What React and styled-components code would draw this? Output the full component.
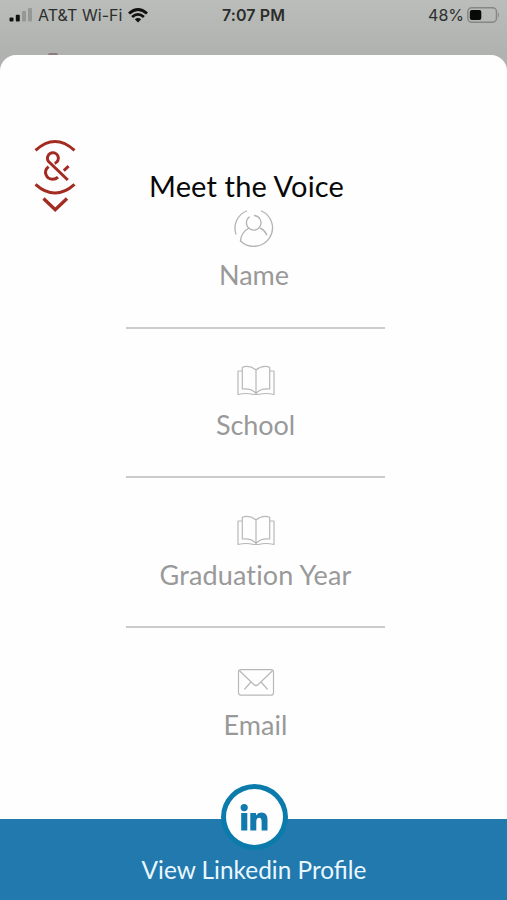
import React from 'react';
import styled, { createGlobalStyle } from 'styled-components';

const GlobalStyle = createGlobalStyle`
  * { box-sizing: border-box; }
  body { margin: 0; font-family: Lato, sans-serif; background: #b1b3b0; }
`;

const Screen = styled.main`
  width: 507px;
  height: 900px;
  display: flex;
  flex-direction: column;
  overflow: hidden;
  background: linear-gradient(#bbbdba 0, #b0b2af 55px, #b0b2af 100%);
`;

const StatusBar = styled.header`
  height: 55px;
  flex: none;
  display: grid;
  grid-template-columns: 1fr auto 1fr;
  grid-template-rows: 30px 1fr;
  align-items: center;
  padding: 0 7px 0 9px;
  font-family: Inter, sans-serif;
  font-size: 16px;
  color: #2c2e2c;
`;

const StatusGroup = styled.div`
  display: flex;
  align-items: center;
  justify-content: ${(p) => (p.$end ? 'flex-end' : 'flex-start')};
  gap: ${(p) => p.$gap}px;
  white-space: nowrap;
  svg { display: block; flex: none; }
`;

const StatusLabel = styled.span`
  font-size: 16px;
  letter-spacing: ${(p) => p.$tracking || 0}px;
`;

const Clock = styled.time`
  font-size: 16px;
  font-weight: 600;
  letter-spacing: 0.1px;
  margin-right: 2px;
`;

const BackgroundTab = styled.span`
  grid-row: 2;
  align-self: end;
  width: 10px;
  height: 2px;
  margin-left: 39px;
  background: #8d7c7b;
  border-radius: 2px 2px 0 0;
`;

const Sheet = styled.section`
  flex: 1;
  display: flex;
  flex-direction: column;
  background: #fefefe;
  border-radius: 16px 16px 0 0;
`;

const SheetHeader = styled.div`
  height: 148px;
  flex: none;
  display: grid;
  grid-template-columns: 78px 1fr 92px;
  align-items: start;
  padding-top: 84px;
`;

const CloseButton = styled.button`
  margin: 0 0 0 32px;
  padding: 0;
  border: 0;
  width: 46px;
  height: 76px;
  background: none;
  svg { display: block; }
`;

const Title = styled.h1`
  margin: 29px 0 0;
  text-align: center;
  font-size: 29px;
  line-height: 36px;
  font-weight: 400;
  letter-spacing: 0.15px;
  color: #080808;
  white-space: nowrap;
`;

const Fields = styled.div`
  width: 259px;
  margin: 0 0 0 126px;
  display: flex;
  flex-direction: column;
  flex: 1;
`;

const Field = styled.div`
  height: ${(p) => (p.$first ? 125.5 : 149.8)}px;
  flex: none;
  display: flex;
  flex-direction: column;
  align-items: center;
  justify-content: flex-end;
  padding: 0 ${(p) => (p.$first ? 3 : 0)}px ${(p) => (p.$first ? 34 : 33.4)}px 0;
  border-bottom: 2px solid ${(p) => (p.$last ? 'transparent' : '#cbcbcb')};
  svg { display: block; }
`;

const FieldLabel = styled.span`
  margin-top: 9px;
  font-size: 27px;
  line-height: 36px;
  color: #999;
  font-variant-ligatures: none;
  letter-spacing: ${(p) => p.$tracking || 0}px;
`;

const ProfileLink = styled.a`
  position: relative;
  height: 81px;
  flex: none;
  display: flex;
  justify-content: center;
  padding: 35px 0 0 1px;
  background: #2279ae;
  color: #e9f7ff;
  font-size: 24.4px;
  line-height: 32px;
  text-decoration: none;
`;

const LinkedinBadge = styled.span`
  position: absolute;
  left: 221px;
  top: -35px;
  width: 67px;
  height: 66px;
  border: 5.5px solid #0b7bab;
  border-radius: 50%;
  background: #fefefe;
  display: grid;
  place-items: center;
`;

const SignalIcon = () => (
  <svg width="24" height="15" viewBox="0 0 24 15">
    <rect x="0.5" y="9.5" width="4" height="4" rx="1" fill="#111" />
    <rect x="6.8" y="6.8" width="4" height="6.7" rx="1" fill="#111" />
    <rect x="13" y="3" width="4" height="10.5" rx="1" fill="#969896" />
    <rect x="19" y="0" width="4" height="13.5" rx="1" fill="#969896" />
  </svg>
);

const WifiIcon = () => (
  <svg width="20" height="15" viewBox="0 0 20 15" fill="none" stroke="#111" strokeWidth="2.8">
    <path d="M1 5.5Q10-2.5 19 5.5M4.1 9Q10 3.7 15.9 9" />
    <path d="M6.8 11.3Q10 8.6 13.2 11.3L10 14.5Z" fill="#111" stroke="none" />
  </svg>
);

const BatteryIcon = () => (
  <svg width="33" height="17" viewBox="0 0 33 17">
    <rect x="0.8" y="0.8" width="28.7" height="14.4" rx="4" fill="none" stroke="#858785" strokeWidth="1.5" />
    <rect x="2.8" y="3" width="11.5" height="10" rx="2" fill="#090909" />
    <path d="M31 5.5q2 2.5 0 5z" fill="#858785" />
  </svg>
);

const AmpersandLogo = () => (
  <svg width="46" height="76" viewBox="0 0 46 76" fill="none" stroke="#a32c22" strokeWidth="3">
    <path d="M3.5 11.4Q23-6.4 42.5 11.4M3.5 45.3Q23 62.8 42.5 45.3" />
    <path d="M35.8 41L16.6 22.6A5.5 5.5 0 1 1 22.6 24.4M16.6 27.6C10.5 32.5 14.5 40.3 20.6 40.3Q23.8 40.3 26 38.2M31.8 31.6L36.6 27.2" />
    <path strokeWidth="3.4" d="M11.5 59.5L23.2 70.7L35 59.5" />
  </svg>
);

const PersonIcon = () => (
  <svg width="40" height="40" viewBox="0 0 40 40" fill="none" stroke="#b3b3b3" strokeWidth="1.3" strokeLinecap="round">
    <path d="M12.5 3A19 18.5 0 0 0 2 26M27.5 3A18.8 18.5 0 1 1 6.5 33" />
    <path d="M15.2 9A7.3 7.3 0 1 0 20.5 7.5M14.6 20.2Q7 24.5 6.5 33M26.4 20.2Q31 22.5 32.7 26.8" />
  </svg>
);

const BookIcon = () => (
  <svg width="40" height="40" viewBox="0 0 40 40" fill="none" stroke="#b8b8b8" strokeWidth="1.2" strokeLinejoin="round">
    <path d="M20 12Q13.5 6.7 6.3 9.3V31Q15.5 30 20 35.5Q24.5 30 33.7 31V9.3Q26.5 6.7 20 12V35.5" />
    <path d="M6.3 13H2V36.5Q10.5 34.5 17.5 36.5H22.5Q29.5 34.5 38 36.5V13H33.7" />
  </svg>
);

const EnvelopeIcon = () => (
  <svg width="40" height="40" viewBox="0 0 40 40" fill="none" stroke="#b8b8b8" strokeWidth="1.2" strokeLinecap="round" strokeLinejoin="round">
    <rect x="2.5" y="11.7" width="35" height="25.5" rx="2.5" />
    <path d="M4 13.2L17.8 26.5Q20 28.5 22.2 26.5L36 13.2M14.5 24.5L8.8 31M25.5 24.5L31.2 31" />
  </svg>
);

const LinkedinMark = () => (
  <svg width="29" height="27" viewBox="0 0 29 27" fill="#1179ad">
    <circle cx="4.2" cy="3.6" r="3.6" />
    <path d="M1.2 9H7.3V26.5H1.2ZM10.3 9H16V11.4Q17.8 8.6 21.4 8.6Q27.5 8.6 27.5 16V26.5H21.6V17.5Q21.6 13.7 19.2 13.7Q16.3 13.7 16.3 17.5V26.5H10.3Z" />
  </svg>
);

const fields = [
  { label: 'Name', Icon: PersonIcon },
  { label: 'School', Icon: BookIcon, tracking: -0.1 },
  { label: 'Graduation Year', Icon: BookIcon, tracking: 0.15 },
  { label: 'Email', Icon: EnvelopeIcon, tracking: 0.1 },
];

export default function App() {
  return (
    <>
      <GlobalStyle />
      <Screen>
        <StatusBar>
          <StatusGroup $gap={5}>
            <SignalIcon />
            <StatusLabel $tracking={0.05}>AT&amp;T Wi-Fi</StatusLabel>
            <WifiIcon />
          </StatusGroup>
          <Clock>7:07 PM</Clock>
          <StatusGroup $end $gap={3}>
            <StatusLabel>48%</StatusLabel>
            <BatteryIcon />
          </StatusGroup>
          <BackgroundTab />
        </StatusBar>
        <Sheet>
          <SheetHeader>
            <CloseButton aria-label="Close">
              <AmpersandLogo />
            </CloseButton>
            <Title>Meet the Voice</Title>
          </SheetHeader>
          <Fields>
            {fields.map(({ label, Icon, tracking }, i) => (
              <Field key={label} $first={i === 0} $last={i === fields.length - 1}>
                <Icon />
                <FieldLabel $tracking={tracking}>{label}</FieldLabel>
              </Field>
            ))}
          </Fields>
          <ProfileLink>
            <LinkedinBadge>
              <LinkedinMark />
            </LinkedinBadge>
            View Linkedin Profile
          </ProfileLink>
        </Sheet>
      </Screen>
    </>
  );
}
